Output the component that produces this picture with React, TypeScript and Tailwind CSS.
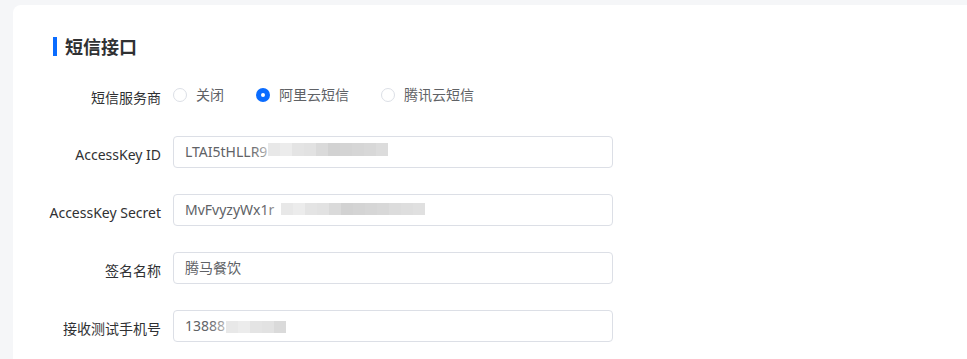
import React from "react";

const font = { fontFamily: "'Noto Sans', 'Noto Sans CJK SC', sans-serif" };

// mosaic shades used to cover the redacted parts of the values
const shades = ["#dcdcdc", "#e4e4e4", "#d6d6d6", "#e8e8e8", "#d2d2d2", "#dedede", "#e2e2e2", "#d8d8d8", "#ececec", "#d4d4d4", "#e0e0e0", "#dadada"];

function Mosaic({ left, top, count, h }: { left: number; top: number; count: number; h: number }) {
  return (
    <div className="absolute flex" style={{ left, top, height: h }}>
      <div className="absolute -inset-x-2 -inset-y-2 rounded-full bg-white/80 blur-sm" />
      {Array.from({ length: count }).map((_, i) => (
        <div key={i} className="relative w-3 h-full" style={{ background: shades[(i * 5 + 3) % shades.length] }} />
      ))}
    </div>
  );
}

function Label({ children }: { children: React.ReactNode }) {
  return (
    <div className="flex w-[108px] h-8 shrink-0 justify-end whitespace-nowrap text-sm leading-8 translate-y-[3px] text-[#303133]">
      <span>{children}</span>
    </div>
  );
}

function Field({ label, value, mosaic }: { label: string; value: string; mosaic?: { left: number; top: number; count: number; h: number } }) {
  return (
    <div className="flex items-start">
      <Label>{label}</Label>
      <div className="relative ml-3 h-8 w-[440px] rounded border border-[#dcdfe6] bg-white px-[11px] text-sm leading-[30px] text-[#606266] overflow-hidden">
        {value}
        {mosaic && <Mosaic {...mosaic} />}
      </div>
    </div>
  );
}

function Radio({ label, checked }: { label: string; checked?: boolean }) {
  return (
    <label className="flex items-center mr-8 cursor-pointer">
      {checked ? (
        <span className="flex h-[14px] w-[14px] items-center justify-center rounded-full bg-[#0a6cff]">
          <span className="h-1 w-1 rounded-full bg-white" />
        </span>
      ) : (
        <span className="h-[14px] w-[14px] rounded-full border border-[#dcdfe6] bg-white" />
      )}
      <span className="pl-[9px] text-sm text-[#606266]">{label}</span>
    </label>
  );
}

export default function App() {
  return (
    <div className="min-h-screen bg-[#f5f6f8] pt-[5px] pl-[13px]" style={font}>
      <div className="min-h-[354px] rounded-tl-lg bg-white pl-10 pt-8">
        {/* title */}
        <div className="flex items-center h-[19px] mb-[23px]">
          <div className="h-[19px] w-1 bg-[#0a6cff]" />
          <div className="ml-2 text-lg font-bold text-[#303133] leading-none">短信接口</div>
        </div>

        {/* provider */}
        <div className="flex items-start h-8 mb-[25px]">
          <Label>短信服务商</Label>
          <div className="ml-3 flex h-8 items-center">
            <Radio label="关闭" />
            <Radio label="阿里云短信" checked />
            <Radio label="腾讯云短信" />
          </div>
        </div>

        <div className="flex flex-col gap-[26px]">
          <Field label="AccessKey ID" value="LTAI5tHLLR9" mosaic={{ left: 94, top: 6, count: 10, h: 13 }} />
          <Field label="AccessKey Secret" value="MvFvyzyWx1r" mosaic={{ left: 107, top: 8, count: 12, h: 12 }} />
          <Field label="签名名称" value="腾马餐饮" />
          <Field label="接收测试手机号" value="13888" mosaic={{ left: 52, top: 10, count: 5, h: 12 }} />
        </div>
      </div>
    </div>
  );
}
